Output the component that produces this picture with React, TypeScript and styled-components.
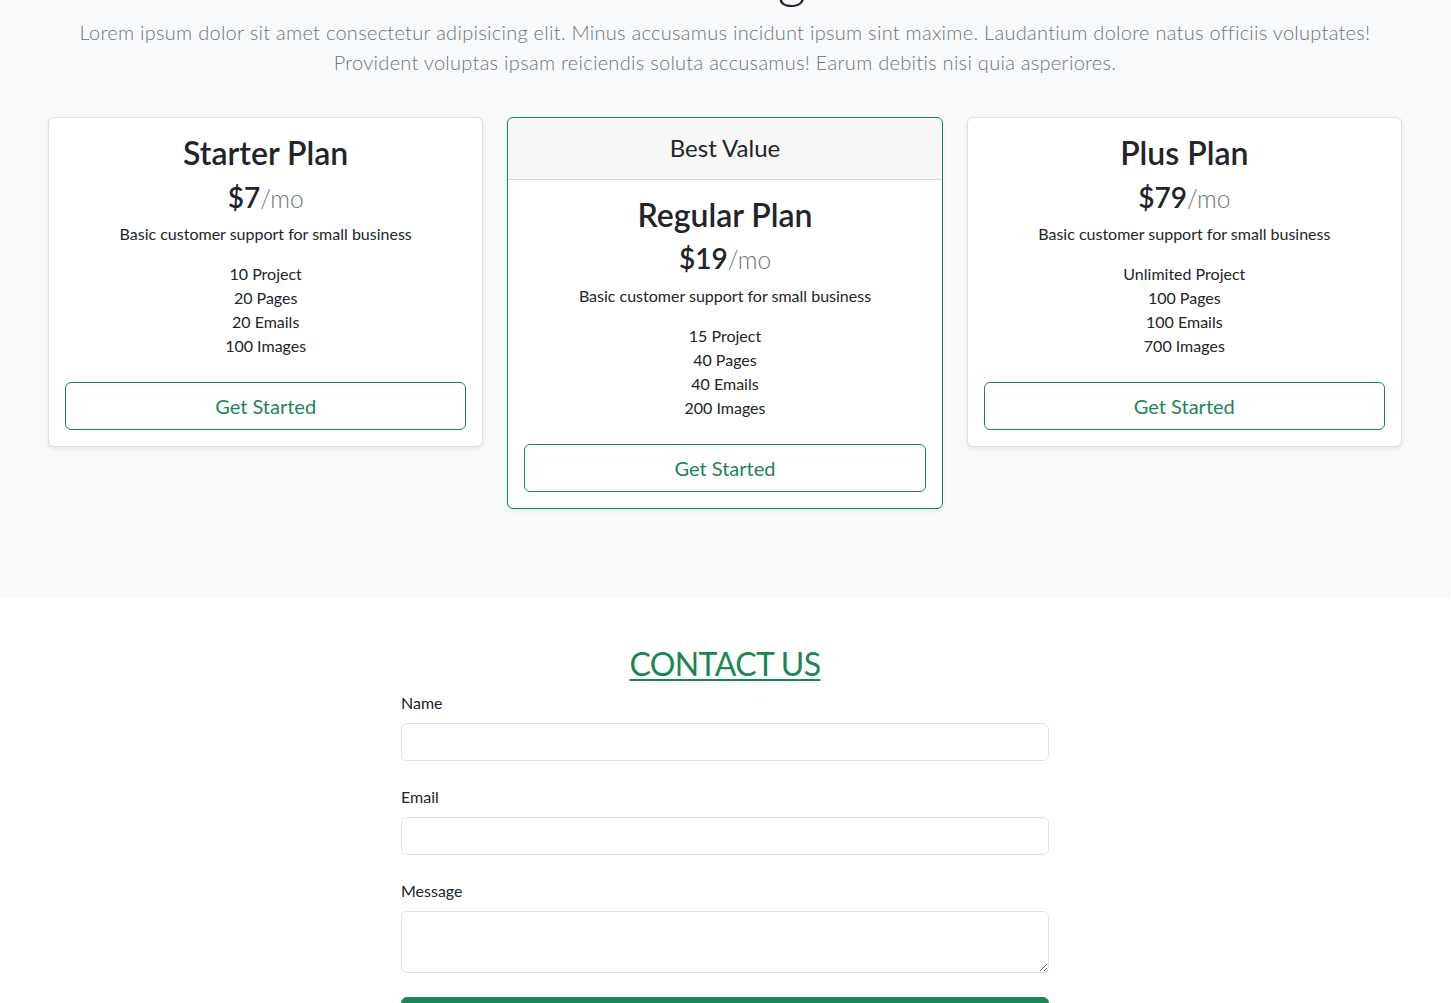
import React from "react";
import styled, { createGlobalStyle } from "styled-components";

const GlobalStyle = createGlobalStyle`
  *, *::before, *::after { box-sizing: border-box; }
  html, body { margin: 0; padding: 0; }
  body {
    font-family: "Lato", "Noto Sans", "Liberation Sans", sans-serif;
    font-size: 16px;
    line-height: 1.5;
    color: #212529;
    background: #ffffff;
    overflow-x: hidden;
  }
  #root { width: 1450px; }
`;

const PricingSection = styled.section`
  background: #f8f9fa;
  padding: 0 0 88px;
`;

const Intro = styled.header`
  max-width: 1296px;
  margin: -58px auto 0;
  text-align: center;
`;

const PageTitle = styled.h1`
  font-size: 56px;
  font-weight: 300;
  line-height: 1.2;
  margin: 0 0 8px;
  color: #212529;
`;

const Lead = styled.p`
  font-size: 20px;
  font-weight: 300;
  line-height: 1.5;
  letter-spacing: 0.28px;
  color: #6c757d;
  margin: 0 0 40px;
`;

const CardGrid = styled.div`
  width: 1354px;
  margin: 0 auto;
  display: grid;
  grid-template-columns: repeat(3, 1fr);
  gap: 24px;
  align-items: start;
`;

const Card = styled.article<{ $featured?: boolean }>`
  background: #fff;
  border: 1px solid ${(p) => (p.$featured ? "#198754" : "rgba(0,0,0,0.13)")};
  border-radius: 6px;
  box-shadow: 0 2px 4px rgba(0, 0, 0, 0.075);
  overflow: hidden;
  text-align: center;
`;

const CardHeader = styled.div`
  background: rgba(0, 0, 0, 0.03);
  border-bottom: 1px solid rgba(0, 0, 0, 0.13);
  padding: 16px;
`;

const HeaderTitle = styled.h4`
  margin: 0;
  font-size: 24px;
  font-weight: 400;
  line-height: 1.2;
`;

const CardBody = styled.div`
  padding: 16px;
`;

const PlanName = styled.h2`
  margin: 0 0 8px;
  font-size: 32px;
  font-weight: 600;
  line-height: 1.2;
`;

const Price = styled.h3`
  margin: 0 0 8px;
  font-size: 28px;
  font-weight: 600;
  line-height: 1.2;
`;

const PerMonth = styled.small`
  font-size: 0.875em;
  font-weight: 300;
  color: #6c757d;
`;

const Description = styled.p`
  margin: 0 0 16px;
  font-size: 16px;
  line-height: 1.5;
`;

const FeatureList = styled.ul`
  list-style: none;
  padding: 0;
  margin: 0 0 24px;
`;

const Feature = styled.li`
  font-size: 16px;
  line-height: 24px;
`;

const OutlineButton = styled.button`
  display: block;
  width: 100%;
  padding: 8px 16px;
  font-family: inherit;
  font-size: 20px;
  line-height: 1.5;
  color: #198754;
  background: transparent;
  border: 1px solid #198754;
  border-radius: 6px;
  cursor: pointer;
`;

const ContactSection = styled.section`
  background: #fff;
  padding: 48px 0;
`;

const ContactTitle = styled.h2`
  margin: 0 0 8px;
  text-align: center;
  font-size: 32px;
  font-weight: 400;
  line-height: 1.2;
  letter-spacing: -0.6px;
  color: #198754;
  text-decoration: underline;
  text-decoration-thickness: 2px;
  text-underline-offset: 3px;
`;

const Form = styled.form`
  width: 648px;
  margin: 0 auto;
`;

const Field = styled.div`
  margin-bottom: 24px;
`;

const Label = styled.label`
  display: block;
  margin-bottom: 8px;
  font-size: 16px;
  line-height: 24px;
`;

const Input = styled.input`
  display: block;
  width: 100%;
  height: 38px;
  padding: 6px 12px;
  font: inherit;
  border: 1px solid #dee2e6;
  border-radius: 6px;
  background: #fff;
`;

const TextArea = styled.textarea`
  display: block;
  width: 100%;
  height: 62px;
  padding: 6px 12px;
  font: inherit;
  border: 1px solid #dee2e6;
  border-radius: 6px;
  background: #fff;
  resize: vertical;
`;

const SubmitButton = styled.button`
  display: block;
  width: 100%;
  padding: 8px 16px;
  font-family: inherit;
  font-size: 20px;
  line-height: 1.5;
  color: #fff;
  background: #198754;
  border: 1px solid #198754;
  border-radius: 6px;
`;

type Plan = {
  name: string;
  price: string;
  features: string[];
  badge?: string;
};

const plans: Plan[] = [
  { name: "Starter Plan", price: "$7", features: ["10 Project", "20 Pages", "20 Emails", "100 Images"] },
  {
    name: "Regular Plan",
    price: "$19",
    badge: "Best Value",
    features: ["15 Project", "40 Pages", "40 Emails", "200 Images"],
  },
  { name: "Plus Plan", price: "$79", features: ["Unlimited Project", "100 Pages", "100 Emails", "700 Images"] },
];

export default function App() {
  return (
    <>
      <GlobalStyle />
      <PricingSection>
        <Intro>
          <PageTitle>Pricing</PageTitle>
          <Lead>
            Lorem ipsum dolor sit amet consectetur adipisicing elit. Minus accusamus incidunt ipsum sint maxime.
            Laudantium dolore natus officiis voluptates! Provident voluptas ipsam reiciendis soluta accusamus! Earum
            debitis nisi quia asperiores.
          </Lead>
        </Intro>
        <CardGrid>
          {plans.map((plan) => (
            <Card key={plan.name} $featured={!!plan.badge}>
              {plan.badge && (
                <CardHeader>
                  <HeaderTitle>{plan.badge}</HeaderTitle>
                </CardHeader>
              )}
              <CardBody>
                <PlanName>{plan.name}</PlanName>
                <Price>
                  {plan.price}
                  <PerMonth>/mo</PerMonth>
                </Price>
                <Description>Basic customer support for small business</Description>
                <FeatureList>
                  {plan.features.map((f) => (
                    <Feature key={f}>{f}</Feature>
                  ))}
                </FeatureList>
                <OutlineButton type="button">Get Started</OutlineButton>
              </CardBody>
            </Card>
          ))}
        </CardGrid>
      </PricingSection>
      <ContactSection>
        <ContactTitle>CONTACT US</ContactTitle>
        <Form onSubmit={(e) => e.preventDefault()}>
          <Field>
            <Label htmlFor="name">Name</Label>
            <Input id="name" type="text" />
          </Field>
          <Field>
            <Label htmlFor="email">Email</Label>
            <Input id="email" type="email" />
          </Field>
          <Field>
            <Label htmlFor="message">Message</Label>
            <TextArea id="message" rows={2} />
          </Field>
          <SubmitButton type="submit">Submit</SubmitButton>
        </Form>
      </ContactSection>
    </>
  );
}
